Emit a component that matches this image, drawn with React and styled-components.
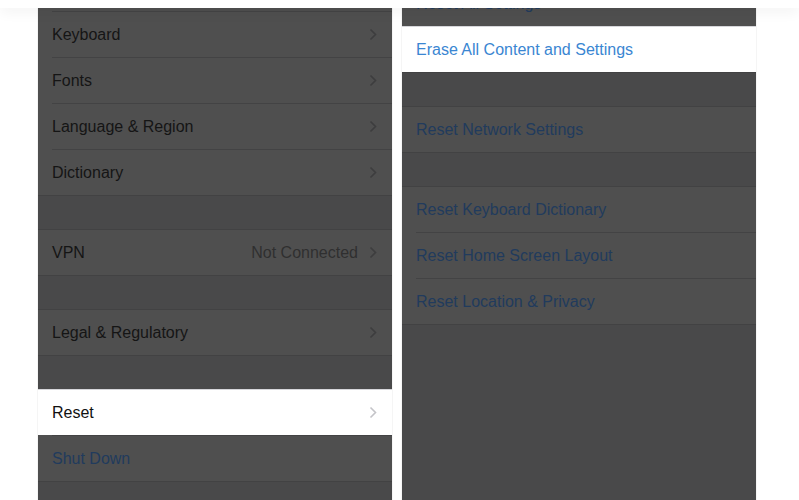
import React from 'react';
import styled, { createGlobalStyle } from 'styled-components';

const Global = createGlobalStyle`
    html, body {
        margin: 0;
        padding: 0;
        background: #fff;
        font-family: "Liberation Sans", Arial, sans-serif;
    }
`;

const TopBar = styled.div`
    height: 8px;
    background: #fff;
    position: relative;
    z-index: 2;
    box-shadow: 0 3px 14px rgba(0, 0, 0, 0.07);
`;

const Stage = styled.div`
    display: flex;
    gap: 10px;
    padding-left: 38px;
`;

const Screen = styled.div`
    width: 354px;
    height: 492px;
    overflow: hidden;
    background: #49494a;
    box-shadow: 0 0 0 1px rgba(0, 0, 0, 0.04);
`;

const List = styled.div`
    display: flex;
    flex-direction: column;
    margin-top: ${p => p.$shift}px;
`;

const Group = styled.div`
    border-top: 1px solid ${p => (p.$litTop ? '#d6d6da' : '#424243')};
    border-bottom: 1px solid #424243;
    margin-bottom: 33px;
`;

const Row = styled.div`
    position: relative;
    box-sizing: border-box;
    height: 45px;
    display: flex;
    align-items: center;
    padding: 0 15px 0 14px;
    background: ${p => (p.$lit ? '#ffffff' : '#4f4f4f')};
    font-size: 16px;
    color: ${p =>
        p.$action ? (p.$lit ? '#3a86d2' : '#213b5d') : p.$lit ? '#111' : '#151515'};

    &:not(:first-child) {
        height: 46px;
        padding-top: 1px;
    }

    &:not(:first-child)::before {
        content: '';
        position: absolute;
        top: 0;
        left: ${p => (p.$lit ? 0 : 14)}px;
        right: 0;
        height: 1px;
        background: ${p => (p.$lit ? '#d6d6da' : '#434344')};
    }
`;

const Label = styled.span`
    flex: 1;
    white-space: nowrap;
`;

const Detail = styled.span`
    color: #2f2f30;
    margin-right: 11px;
`;

const Chevron = ({ lit }) => (
    <svg width="8" height="13" viewBox="0 0 8 13">
        <polyline
            points="1.5,1.5 6.5,6.5 1.5,11.5"
            fill="none"
            stroke={lit ? '#c4c4c8' : '#3d3d3e'}
            strokeWidth="1.6"
        />
    </svg>
);

function Item({ label, detail, lit, action }) {
    return (
        <Row $lit={lit} $action={action}>
            <Label>{label}</Label>
            {detail && <Detail>{detail}</Detail>}
            {!action && <Chevron lit={lit} />}
        </Row>
    );
}

function App() {
    return (
        <>
            <Global />
            <TopBar />
            <Stage>
                <Screen>
                    <List $shift={-43}>
                        <Group>
                            <Item label="Date & Time" />
                            <Item label="Keyboard" />
                            <Item label="Fonts" />
                            <Item label="Language & Region" />
                            <Item label="Dictionary" />
                        </Group>
                        <Group>
                            <Item label="VPN" detail="Not Connected" />
                        </Group>
                        <Group>
                            <Item label="Legal & Regulatory" />
                        </Group>
                        <Group $litTop>
                            <Item label="Reset" lit />
                            <Item label="Shut Down" action />
                        </Group>
                    </List>
                </Screen>
                <Screen>
                    <List $shift={-28}>
                        <Group>
                            <Item label="Reset All Settings" action />
                            <Item label="Erase All Content and Settings" action lit />
                        </Group>
                        <Group>
                            <Item label="Reset Network Settings" action />
                        </Group>
                        <Group>
                            <Item label="Reset Keyboard Dictionary" action />
                            <Item label="Reset Home Screen Layout" action />
                            <Item label="Reset Location & Privacy" action />
                        </Group>
                    </List>
                </Screen>
            </Stage>
        </>
    );
}

export default App;
